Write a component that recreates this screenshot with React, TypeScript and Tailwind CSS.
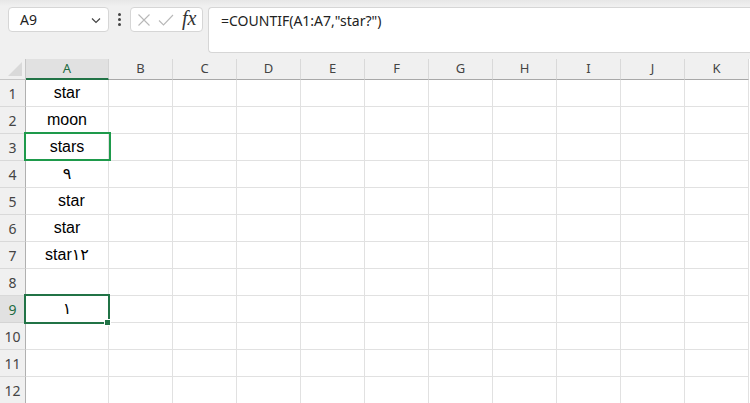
import React from 'react';

const cols = ['A', 'B', 'C', 'D', 'E', 'F', 'G', 'H', 'I', 'J', 'K'];
const data: Record<number, string> = {
  1: 'star',
  2: 'moon',
  3: 'stars',
  4: '٩',
  5: '\u00a0\u00a0star',
  6: 'star',
  7: 'star١٢',
  9: '١',
};

const Toolbar: React.FC = () => (
  <div className="h-[59px] bg-[#f0f0f0] bg-gradient-to-b from-[#e7e7e7] to-[#f0f0f0] bg-[length:100%_6px] bg-no-repeat flex items-start pt-[7px] pl-[8px] gap-0">
    <div className="w-[101px] h-[25px] bg-white border border-[#d6d6d6] rounded-[4px] flex items-center justify-between pl-[11px] pr-[5px] text-[14px] text-[#222]">
      <span>A9</span>
      <svg width="14" height="14" viewBox="0 0 14 14" fill="none" stroke="#444" strokeWidth="1.2">
        <path d="M3 5.5l4 4 4-4" />
      </svg>
    </div>
    <div className="w-[21px] h-[25px] flex flex-col items-center justify-center gap-[2px]">
      <span className="w-[3px] h-[3px] rounded-full bg-[#444]" />
      <span className="w-[3px] h-[3px] rounded-full bg-[#444]" />
      <span className="w-[3px] h-[3px] rounded-full bg-[#444]" />
    </div>
    <div className="w-[73px] h-[25px] bg-white border border-[#d6d6d6] rounded-[4px] flex items-center pl-[6px] gap-[7px]">
      <svg width="14" height="14" viewBox="0 0 14 14" fill="none" stroke="#b8b8b8" strokeWidth="1.1">
        <path d="M1.5 1.5l11 11M12.5 1.5l-11 11" />
      </svg>
      <svg width="16" height="14" viewBox="0 0 16 14" fill="none" stroke="#b8b8b8" strokeWidth="1.1">
        <path d="M1 7.5l4.5 4.5L15 2" />
      </svg>
      <span className="text-[20px] leading-none italic text-[#333] ml-[1px] -mt-[3px]" style={{ fontFamily: '"Liberation Serif", serif' }}>fx</span>
    </div>
    <div className="flex-1 ml-[5px] h-[46px] bg-white border border-[#d6d6d6] border-r-0 rounded-l-[4px] pl-[12px] pt-[2px] text-[14px] text-[#222]">
      =COUNTIF(A1:A7,"star?")
    </div>
  </div>
);

export default function App() {
  const rows = Array.from({ length: 12 }, (_, i) => i + 1);
  return (
    <div className="w-[750px] h-[403px] overflow-hidden bg-white" style={{ fontFamily: '"Noto Sans", "Open Sans", sans-serif' }}>
      <Toolbar />
      <div className="relative">
        <div className="grid grid-cols-[26px_83px_repeat(10,64px)]">
          {/* header row */}
          <div className="h-[21px] bg-[#f0f0f0] border-r border-b border-[#c6c6c6] relative overflow-hidden">
            <svg className="absolute right-[3px] bottom-[3px]" width="14" height="14" viewBox="0 0 14 14">
              <path d="M14 0L14 14L0 14Z" fill="#d9d9d9" />
            </svg>
          </div>
          {cols.map((c) =>
            c === 'A' ? (
              <div key={c} className="h-[21px] bg-[#e1e1e1] border-r border-[#d4d4d4] border-b-2 border-b-[#217346] flex items-center justify-center text-[13px] text-[#1d6b41]">
                {c}
              </div>
            ) : (
              <div key={c} className="h-[21px] bg-[#f0f0f0] border-r border-[#d9d9d9] border-b border-b-[#a8a8a8] flex items-center justify-center text-[13px] text-[#444]">
                {c}
              </div>
            )
          )}
          {rows.map((r) => (
            <React.Fragment key={r}>
              <div
                className={`h-[27px] border-r border-b flex items-end justify-center pb-[2px] text-[14px] ${
                  r === 9 ? 'bg-[#e1e1e1] text-[#1d6b41] border-r-[#b0b0b0] border-b-[#d4d4d4]' : 'bg-[#f0f0f0] text-[#444] border-r-[#b0b0b0] border-b-[#d9d9d9]'
                }`}
              >
                {r}
              </div>
              {cols.map((c) => (
                <div
                  key={c}
                  className="h-[27px] border-r border-b border-[#e1e1e1] flex items-center justify-center text-[16px] text-black whitespace-pre"
                  style={{ fontFamily: '"Liberation Sans", "DejaVu Sans", sans-serif' }}
                >
                  {c === 'A' ? data[r] ?? '' : ''}
                </div>
              ))}
            </React.Fragment>
          ))}
        </div>
        {/* A3 highlight */}
        <div className="absolute left-[24px] top-[73px] w-[87px] h-[29px] border-2 border-[#1e9a4b] pointer-events-none" />
        {/* A9 active cell */}
        <div className="absolute left-[24px] top-[235px] w-[86px] h-[30px] border-2 border-[#217346] pointer-events-none" />
        <div className="absolute left-[104px] top-[260px] w-[7px] h-[7px] bg-[#217346] border border-white pointer-events-none" />
      </div>
    </div>
  );
}
